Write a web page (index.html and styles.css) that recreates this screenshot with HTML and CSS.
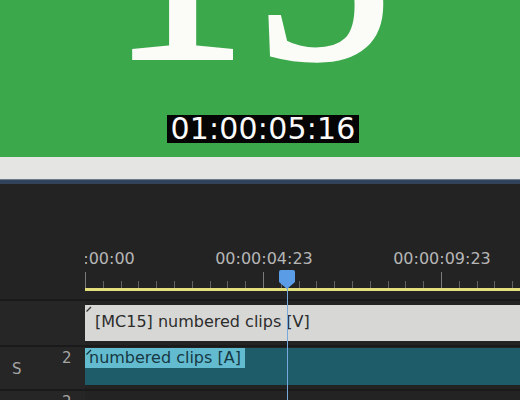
FILE: index.html
```html
<!DOCTYPE html>
<html>
<head>
<meta charset="utf-8">
<link rel="stylesheet" href="styles.css">
</head>
<body>
<div class="app">
  <div class="monitor">
    <div class="numeral">15</div>
    <div class="timecode">01:00:05:16</div>
  </div>
  <div class="band"></div>
  <div class="sep"></div>
  <div class="timeline">
    <div class="ruler-row">
      <div class="head"></div>
      <div class="ruler">
        <div class="labels">
          <span class="label">00:00:00:00</span>
          <span class="label">00:00:04:23</span>
          <span class="label">00:00:09:23</span>
        </div>
        <div class="ticks"></div>
        <div class="workarea"></div>
      </div>
    </div>
    <div class="track v-track">
      <div class="head"></div>
      <div class="lane">
        <div class="clip clip-v">
          <svg class="mark" width="6" height="6" viewBox="0 0 6 6"><path d="M0.5 5.5 L5 1" stroke="#333" stroke-width="1.2"/></svg>
          <span>[MC15] numbered clips [V]</span>
        </div>
      </div>
    </div>
    <div class="track a-track">
      <div class="head"><span class="s">S</span><span class="num">2</span></div>
      <div class="lane">
        <div class="clip clip-a">
          <div class="clip-label">
            <svg class="mark" width="6" height="6" viewBox="0 0 6 6"><path d="M0.5 5.5 L5 1" stroke="#14313a" stroke-width="1.2"/></svg>
            <span>numbered clips [A]</span>
          </div>
        </div>
      </div>
    </div>
    <div class="track last-track">
      <div class="head"><span class="s"></span><span class="num">2</span></div>
      <div class="lane"></div>
    </div>
    <div class="playhead">
      <svg width="18" height="20" viewBox="0 0 18 20"><path d="M1 2 Q1 0 3 0 L15 0 Q17 0 17 2 L17 12 L9 19 L1 12 Z" fill="#5a9de6"/></svg>
      <div class="ph-line"></div>
    </div>
  </div>
</div>
</body>
</html>
```
FILE: styles.css
```css
html, body {
  margin: 0;
  padding: 0;
  background: #232323;
}
.app {
  width: 520px;
  height: 400px;
  overflow: hidden;
  display: flex;
  flex-direction: column;
}
.monitor {
  position: relative;
  height: 157px;
  flex: none;
  background: #3ca84c;
  overflow: hidden;
  display: flex;
  flex-direction: column;
  align-items: center;
}
.numeral {
  position: absolute;
  left: 110px;
  top: -172px;
  height: 240px;
  overflow: hidden;
  font-family: "Liberation Serif", "Times New Roman", serif;
  font-size: 275px;
  line-height: 1;
  letter-spacing: 7px;
  color: #fbfbf8;
  -webkit-text-stroke: 4px #fbfbf8;
}
.timecode {
  margin-top: 115px;
  margin-left: 6px;
  height: 28px;
  padding: 0 3px;
  background: #050505;
  color: #fafafa;
  font-family: "DejaVu Sans", sans-serif;
  font-size: 30px;
  line-height: 28px;
  letter-spacing: 0.2px;
}
.band {
  height: 22px;
  flex: none;
  background: #e5e6e3;
}
.sep {
  height: 4px;
  flex: none;
  border-top: 1px solid #6d7d8e;
  background: #30435a;
}
.timeline {
  position: relative;
  flex: 1;
  display: flex;
  flex-direction: column;
  background: #232323;
  font-family: "DejaVu Sans", sans-serif;
}
.ruler-row {
  display: flex;
  height: 112px;
  flex: none;
}
.head {
  width: 85px;
  flex: none;
}
.ruler {
  flex: 1;
  overflow: hidden;
  display: flex;
  flex-direction: column;
}
.labels {
  display: flex;
  margin-left: -88px;
  margin-top: 64px;
  height: 24px;
}
.label {
  width: 178px;
  flex: none;
  text-align: center;
  color: #b6b6b6;
  font-size: 16px;
  line-height: 22px;
}
.ticks {
  height: 16px;
  background:
    repeating-linear-gradient(to right, #7a7a7a 0 1px, transparent 1px 178px) 0 0 / 100% 16px no-repeat,
    repeating-linear-gradient(to right, #636363 0 1px, transparent 1px 17.8px) 0 9px / 100% 7px no-repeat;
}
.workarea {
  height: 3px;
  background: #e3e07c;
}
.track {
  display: flex;
  border-top: 2px solid #1a1a1a;
}
.track .head {
  background: #262626;
  display: flex;
  align-items: flex-start;
  color: #a5a5a5;
  font-size: 15px;
}
.track .lane {
  flex: 1;
}
.v-track {
  height: 44px;
  flex: none;
  margin-top: 3px;
}
.v-track .lane {
  padding-top: 4px;
}
.clip {
  position: relative;
  height: 36px;
  box-sizing: border-box;
}
.clip-v {
  background: #d7d7d6;
  color: #2c2c2c;
  font-size: 16px;
  line-height: 33px;
  padding-left: 10px;
}
.mark {
  position: absolute;
  left: 1px;
  top: 1px;
}
.a-track {
  height: 42px;
  flex: none;
}
.a-track .lane {
  padding-top: 1px;
}
.a-track .head .s {
  width: 62px;
  padding-left: 12px;
  padding-top: 13px;
  box-sizing: border-box;
}
.num {
  padding-top: 2px;
}
.clip-a {
  height: 37px;
  background: #1f5c6a;
}
.clip-a .clip-label {
  position: relative;
  width: 160px;
  height: 20px;
  background: #63bbd0;
  color: #163842;
  font-size: 16px;
  line-height: 19px;
  padding-left: 4px;
  box-sizing: border-box;
}
.last-track {
  flex: 1;
}
.last-track .head .s {
  width: 62px;
}
.playhead {
  position: absolute;
  left: 278px;
  top: 86px;
  width: 18px;
  display: flex;
  flex-direction: column;
  align-items: center;
}
.ph-line {
  width: 1px;
  height: 140px;
  margin-top: -2px;
  background: #78a8dc;
}
```
